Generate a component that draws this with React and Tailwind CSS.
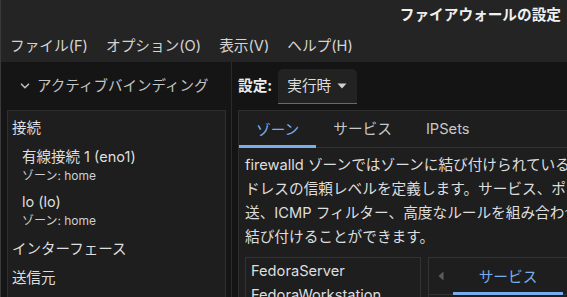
import React from "react";

const FONT = "font-['Inter','Noto_Sans_CJK_JP',sans-serif]";

function Chevron() {
  return (
    <svg width="10" height="10" viewBox="0 0 10 10" className="shrink-0">
      <path d="M1.5 3.2 L5 6.7 L8.5 3.2" stroke="#bdbdbd" strokeWidth="1.6" fill="none" strokeLinecap="round" strokeLinejoin="round" />
    </svg>
  );
}

export default function App() {
  return (
    <div className={`${FONT} w-[567px] h-[297px] overflow-hidden bg-[#151515] text-[#dedede] flex flex-col`}>
      {/* Header + menu */}
      <div className="shrink-0 bg-[#242424] border-l border-[#3a3a3a]">
        <div className="h-[30px] flex items-center justify-end pr-[6px]">
          <span className="text-[14.67px] font-bold text-[#f0f0f0]">ファイアウォールの設定</span>
        </div>
        <div className="h-[32px] flex items-center text-[14.67px] text-[#d4d4d4]">
          <span className="px-[9px]">ファイル(F)</span>
          <span className="px-[9px]">オプション(O)</span>
          <span className="px-[9px]">表示(V)</span>
          <span className="px-[9px]">ヘルプ(H)</span>
        </div>
      </div>

      {/* Body */}
      <div className="flex flex-1 min-h-0">
        {/* Sidebar */}
        <div className="w-[232px] shrink-0 border-r border-[#2b2b2b] border-l border-l-[#3a3a3a] bg-[#151515] flex flex-col pl-[6px] pr-[5px]">
          <div className="h-[48px] shrink-0 flex items-center gap-[7px] pl-[13px] text-[14.5px] text-[#c4c4c4]">
            <Chevron />
            <span>アクティブバインディング</span>
          </div>
          <div className="flex-1 bg-[#1e1e1e] border border-[#2e2e2e] border-b-0">
            <div className="h-[34px] flex items-center pl-[4px] text-[14.5px]">接続</div>
            <div className="h-[45px] pl-[14px] flex flex-col">
              <div className="h-[24px] flex items-center text-[14.5px]">有線接続 1 (eno1)</div>
              <div className="h-[14px] flex items-center text-[12px] text-[#cfcfcf]">ゾーン: home</div>
            </div>
            <div className="h-[45px] pl-[14px] flex flex-col">
              <div className="h-[24px] flex items-center text-[14.5px]">lo (lo)</div>
              <div className="h-[14px] flex items-center text-[12px] text-[#cfcfcf]">ゾーン: home</div>
            </div>
            <div className="h-[28px] flex items-center pl-[4px] text-[14.5px]">インターフェース</div>
            <div className="h-[30px] flex items-center pl-[4px] text-[14.5px]">送信元</div>
          </div>
        </div>

        {/* Main pane */}
        <div className="flex-1 min-w-0 overflow-hidden bg-[#141414] pl-[6px] flex flex-col">
          <div className="h-[48px] shrink-0 flex items-center gap-[6px]">
            <span className="text-[14.67px] font-bold text-[#ececec]">設定:</span>
            <div className="h-[35px] w-[79px] bg-[#222222] rounded-t-[5px] border-b border-[#6a6a6a] flex items-center pl-[9px] gap-[6px] text-[14.67px]">
              <span>実行時</span>
              <svg width="10" height="6" viewBox="0 0 10 6">
                <path d="M0.5 0.5 H9.5 L5 5.5 Z" fill="#d0d0d0" />
              </svg>
            </div>
          </div>

          <div className="w-[420px] flex-1 bg-[#1e1e1e] border border-[#2e2e2e] border-b-0 flex flex-col">
            <div className="h-[37px] shrink-0 flex border-b border-[#333333] text-[14.67px]">
              <div className="px-[17px] flex items-center text-[#78aeed] border-b-[3px] border-[#78aeed] pt-[3px] -mb-px">ゾーン</div>
              <div className="px-[17px] flex items-center text-[#c8c8c8]">サービス</div>
              <div className="px-[17px] flex items-center text-[#c8c8c8]">IPSets</div>
            </div>
            <div className="shrink-0 pl-[6px] pt-[5px] text-[14.67px] leading-[24px] whitespace-nowrap">
              <div>firewalld ゾーンではゾーンに結び付けられているネットワーク接続、インターフェース</div>
              <div>ドレスの信頼レベルを定義します。サービス、ポート、プロトコル、マスカレード、ポート</div>
              <div>送、ICMP フィルター、高度なルールを組み合わせることができます。ゾーンはインターフェース</div>
              <div>結び付けることができます。</div>
            </div>
            <div className="flex gap-[7px] pl-[6px] mt-[8px] flex-1">
              <div className="w-[176px] border border-[#333333] border-b-0 bg-[#1e1e1e] pt-[1px] text-[14.67px]">
                <div className="h-[24px] flex items-center pl-[5px]">FedoraServer</div>
                <div className="h-[24px] flex items-center pl-[5px]">FedoraWorkstation</div>
              </div>
              <div className="flex-1 border border-[#333333] border-b-0 flex flex-col">
                <div className="h-[37px] shrink-0 flex border-b border-[#333333]">
                  <div className="w-[24px] flex items-center justify-center">
                    <svg width="6" height="10" viewBox="0 0 6 10">
                      <path d="M5.5 0.5 V9.5 L0.5 5 Z" fill="#5c5c5c" />
                    </svg>
                  </div>
                  <div className="w-[110px] flex items-center justify-center text-[14.67px] text-[#78aeed] border-b-[3px] border-[#78aeed] pt-[3px] -mb-px">サービス</div>
                </div>
              </div>
            </div>
          </div>
        </div>
      </div>
    </div>
  );
}
